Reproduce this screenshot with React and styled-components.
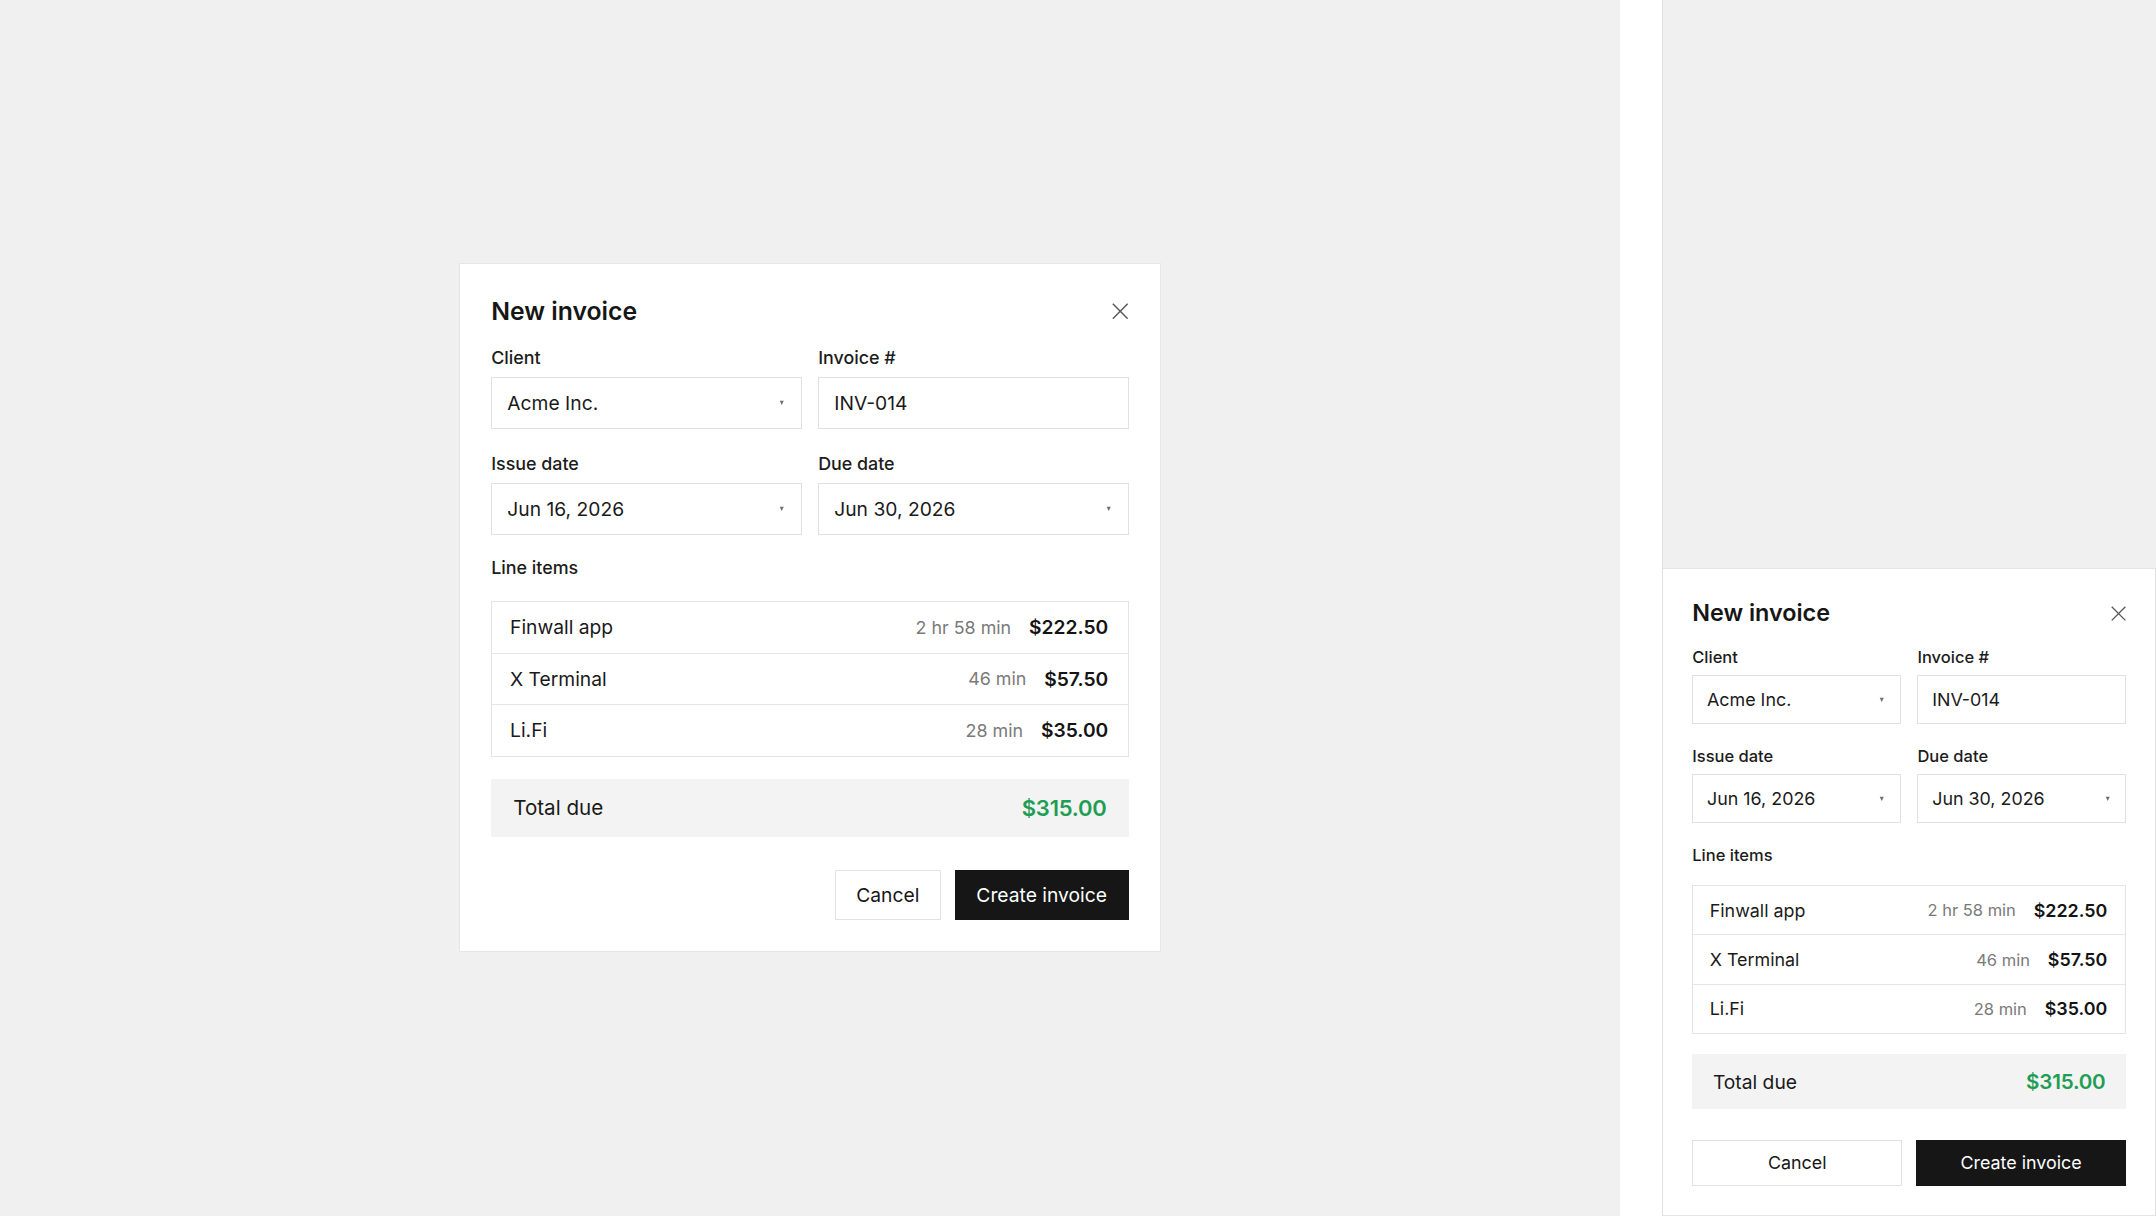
import React from "react";
import styled, { createGlobalStyle, css } from "styled-components";

const GlobalStyle = createGlobalStyle`
  html, body {
    margin: 0;
    padding: 0;
    background: #ffffff;
  }

  body {
    font-family: Inter, "Noto Sans", "Liberation Sans", sans-serif;
    color: #161616;
    -webkit-font-smoothing: antialiased;
  }

  * {
    box-sizing: border-box;
  }
`;

const Screen = styled.div`
  zoom: 1.375;
  width: 1568px;
  height: 884px;
  display: flex;
  gap: 31px;
  background: #ffffff;
  overflow: hidden;
`;

const Stage = styled.section`
  flex: 0 0 1178px;
  background: #f0f0f0;
  display: flex;
  align-items: center;
  justify-content: center;
`;

const Phone = styled.section`
  flex: 1;
  background: #f0f0f0;
  border-left: 1px solid #e2e2e2;
  display: flex;
  flex-direction: column;
  justify-content: flex-end;
`;

const Panel = styled.div`
  background: #ffffff;
  display: flex;
  flex-direction: column;

  ${({ $compact }) =>
    $compact
      ? css`
          border: 1px solid #e4e4e4;
          border-left: 0;
          padding: 21px;
          gap: 15px;
        `
      : css`
          width: 511px;
          border: 1px solid #e6e6e6;
          padding: 23px;
          gap: 16px;
        `}
`;

const Header = styled.div`
  display: flex;
  align-items: center;
  justify-content: space-between;
  height: 22px;
  margin-bottom: ${({ $compact }) => ($compact ? "-2px" : "-1px")};
`;

const Title = styled.h2`
  margin: 0;
  font-size: ${({ $compact }) => ($compact ? "17px" : "18px")};
  line-height: 22px;
  font-weight: 600;
  color: #161616;
`;

const CloseButton = styled.button`
  border: 0;
  padding: 0;
  background: transparent;
  color: #5a5a5a;
  display: flex;
  cursor: pointer;
`;

const FieldGrid = styled.div`
  display: grid;
  grid-template-columns: 1fr 1fr;
  column-gap: 12px;
  row-gap: ${({ $compact }) => ($compact ? "15px" : "17px")};
`;

const Field = styled.div`
  display: flex;
  flex-direction: column;
  gap: ${({ $compact }) => ($compact ? "5px" : "6px")};
`;

const Label = styled.div`
  font-size: ${({ $compact }) => ($compact ? "12px" : "13px")};
  line-height: 16px;
  font-weight: 500;
  color: #1c1c1c;
  margin-bottom: ${({ $section, $compact }) => ($section && $compact ? "-1px" : "0")};
`;

const Control = styled.div`
  display: flex;
  align-items: center;
  justify-content: space-between;
  height: ${({ $compact }) => ($compact ? "36px" : "38px")};
  padding: ${({ $compact }) => ($compact ? "0 11px 0 10px" : "0 12px 0 11px")};
  border: 1px solid #e1e1e1;
  background: #ffffff;
  font-size: ${({ $compact }) => ($compact ? "13px" : "14px")};
  color: #1a1a1a;
`;

const Caret = styled.svg`
  width: 4px;
  height: 4px;
  flex: none;
`;

const ItemList = styled.div`
  border: 1px solid #e4e4e4;
`;

const ItemRow = styled.div`
  box-sizing: content-box;
  display: flex;
  align-items: center;
  height: ${({ $compact }) => ($compact ? "35px" : "36.7px")};
  padding: ${({ $compact }) => ($compact ? "0 13px 0 12px" : "0 14px 0 13px")};

  & + & {
    border-top: 1px solid #e6e6e6;
  }
`;

const ItemName = styled.span`
  flex: 1;
  font-size: ${({ $compact }) => ($compact ? "13px" : "14px")};
  color: #1a1a1a;
`;

const ItemTime = styled.span`
  font-size: ${({ $compact }) => ($compact ? "12px" : "13px")};
  color: #7a7a7a;
  margin-right: 13px;
`;

const ItemAmount = styled.span`
  font-size: ${({ $compact }) => ($compact ? "13px" : "14px")};
  font-weight: 600;
  color: #141414;
`;

const TotalBar = styled.div`
  display: flex;
  align-items: center;
  justify-content: space-between;
  height: ${({ $compact }) => ($compact ? "40px" : "42.5px")};
  padding: ${({ $compact }) => ($compact ? "0 15px" : "0 16px")};
  background: #f3f3f3;
`;

const TotalLabel = styled.span`
  font-size: ${({ $compact }) => ($compact ? "14px" : "15px")};
  color: #1a1a1a;
`;

const TotalValue = styled.span`
  font-size: ${({ $compact }) => ($compact ? "15px" : "16px")};
  font-weight: 600;
  letter-spacing: -0.01em;
  color: #1f9d55;
`;

const Actions = styled.div`
  display: flex;
  justify-content: flex-end;
  gap: 10px;
  margin-top: ${({ $compact }) => ($compact ? "7px" : "8px")};
`;

const Button = styled.button`
  height: ${({ $compact }) => ($compact ? "33.5px" : "36px")};
  padding: 0 15px;
  flex: ${({ $compact }) => ($compact ? "1" : "none")};
  font-family: inherit;
  font-size: ${({ $compact }) => ($compact ? "13px" : "14px")};
  font-weight: 400;
  cursor: pointer;
  border: 1px solid ${({ $primary }) => ($primary ? "#161616" : "#e2e2e2")};
  background: ${({ $primary }) => ($primary ? "#161616" : "#ffffff")};
  color: ${({ $primary }) => ($primary ? "#ffffff" : "#161616")};
`;

const lineItems = [
  { name: "Finwall app", time: "2 hr 58 min", amount: "$222.50" },
  { name: "X Terminal", time: "46 min", amount: "$57.50" },
  { name: "Li.Fi", time: "28 min", amount: "$35.00" },
];

const fields = [
  { label: "Client", value: "Acme Inc.", select: true },
  { label: "Invoice #", value: "INV-014", select: false },
  { label: "Issue date", value: "Jun 16, 2026", select: true },
  { label: "Due date", value: "Jun 30, 2026", select: true },
];

function CloseIcon({ size }) {
  return (
    <svg width={size} height={size} viewBox="0 0 12 12" fill="none">
      <path d="M0.6 0.6L11.4 11.4M11.4 0.6L0.6 11.4" stroke="currentColor" strokeWidth="1.1" />
    </svg>
  );
}

function InvoiceForm({ compact }) {
  return (
    <Panel $compact={compact}>
      <Header $compact={compact}>
        <Title $compact={compact}>New invoice</Title>
        <CloseButton type="button" aria-label="Close">
          <CloseIcon size={compact ? 11 : 12} />
        </CloseButton>
      </Header>

      <FieldGrid $compact={compact}>
        {fields.map((f) => (
          <Field key={f.label} $compact={compact}>
            <Label $compact={compact}>{f.label}</Label>
            <Control $compact={compact}>
              <span>{f.value}</span>
              {f.select && (
                <Caret viewBox="0 0 4 4">
                  <path d="M0.5 0.6H3.5L2 3.6Z" fill="#707070" />
                </Caret>
              )}
            </Control>
          </Field>
        ))}
      </FieldGrid>

      <Label $compact={compact} $section>Line items</Label>

      <ItemList>
        {lineItems.map((item) => (
          <ItemRow key={item.name} $compact={compact}>
            <ItemName $compact={compact}>{item.name}</ItemName>
            <ItemTime $compact={compact}>{item.time}</ItemTime>
            <ItemAmount $compact={compact}>{item.amount}</ItemAmount>
          </ItemRow>
        ))}
      </ItemList>

      <TotalBar $compact={compact}>
        <TotalLabel $compact={compact}>Total due</TotalLabel>
        <TotalValue $compact={compact}>$315.00</TotalValue>
      </TotalBar>

      <Actions $compact={compact}>
        <Button type="button" $compact={compact}>Cancel</Button>
        <Button type="button" $compact={compact} $primary>Create invoice</Button>
      </Actions>
    </Panel>
  );
}

export default function App() {
  return (
    <>
      <GlobalStyle />
      <Screen>
        <Stage>
          <InvoiceForm />
        </Stage>
        <Phone>
          <InvoiceForm compact />
        </Phone>
      </Screen>
    </>
  );
}
